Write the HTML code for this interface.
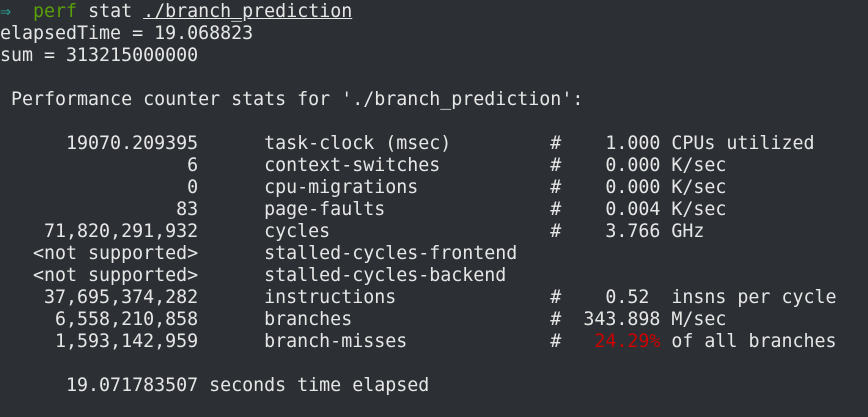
<!DOCTYPE html>
<html><head><meta charset="utf-8"><style>
html,body{margin:0;padding:0;background:#2c3034;width:868px;height:417px;overflow:hidden}
pre{margin:0;padding:1px 0 0 0;font-family:"DejaVu Sans Mono","Liberation Mono",monospace;font-size:18.3px;line-height:22px;color:#e6e6e6;white-space:pre}
.c{color:#2aa198}.g{color:#5a9e0a}.r{color:#cc0000}.u{text-decoration:underline}
</style></head><body><pre><span class="c">⇒</span>  <span class="g">perf</span> stat <span class="u">./branch_prediction</span>
elapsedTime = 19.068823
sum = 313215000000

 Performance counter stats for './branch_prediction':

      19070.209395      task-clock (msec)         #    1.000 CPUs utilized
                 6      context-switches          #    0.000 K/sec
                 0      cpu-migrations            #    0.000 K/sec
                83      page-faults               #    0.004 K/sec
    71,820,291,932      cycles                    #    3.766 GHz
   &lt;not supported&gt;      stalled-cycles-frontend
   &lt;not supported&gt;      stalled-cycles-backend
    37,695,374,282      instructions              #    0.52  insns per cycle
     6,558,210,858      branches                  #  343.898 M/sec
     1,593,142,959      branch-misses             #   <span class="r">24.29%</span> of all branches

      19.071783507 seconds time elapsed
</pre></body></html>
